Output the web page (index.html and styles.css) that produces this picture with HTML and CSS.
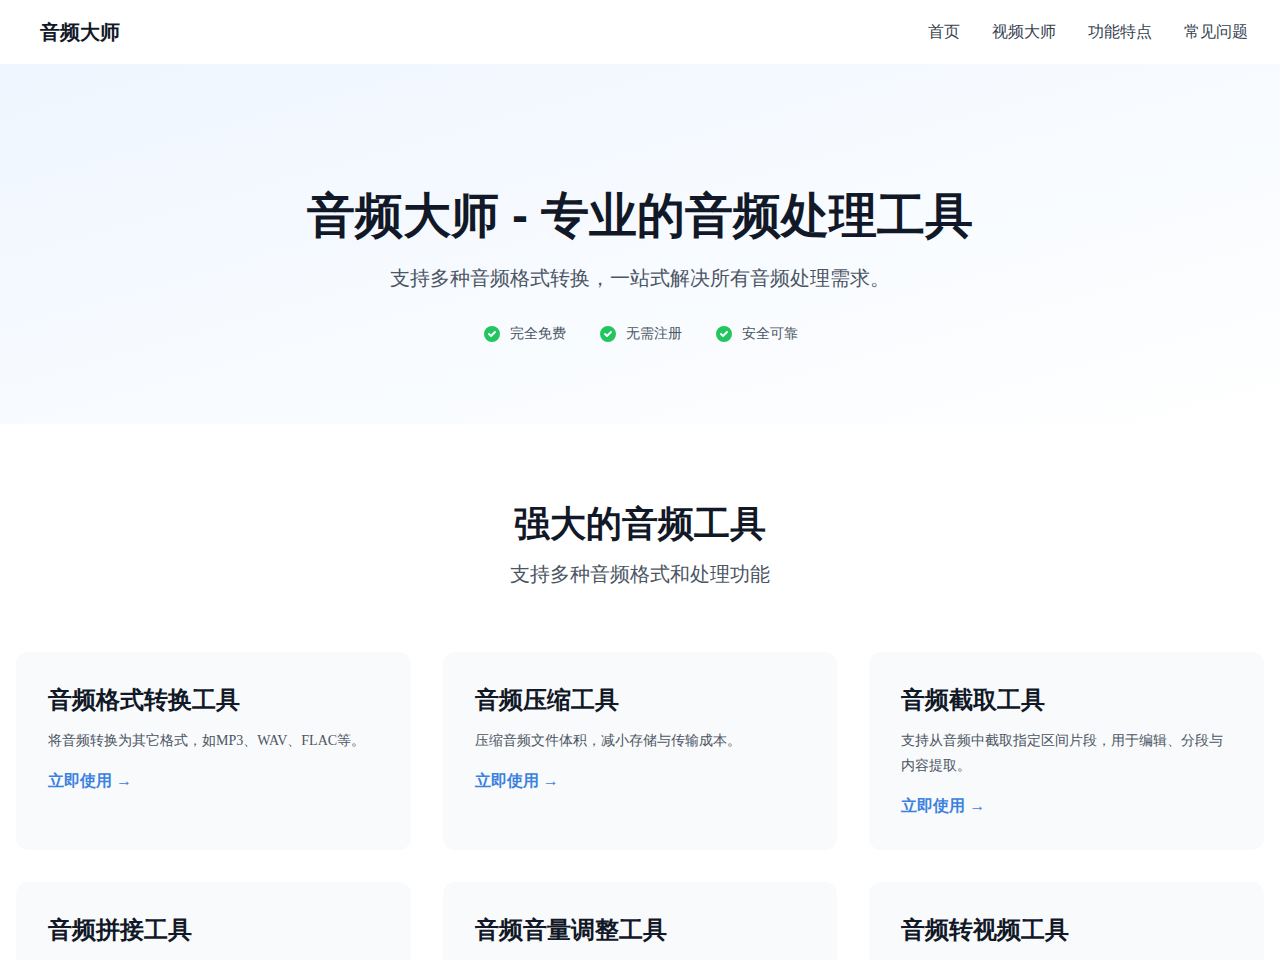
FILE: index.html
```html
<!DOCTYPE html>
<html lang="en">
<head>
  <meta charset="UTF-8" />
  <meta name="viewport" content="width=device-width, initial-scale=1.0"/>
  <title>音频大师 - 专业的音频处理工具</title>
  <link rel="stylesheet" href="styles.css">
</head>
<body>
  <header class="navbar">
    <a class="logo" href="#">音频大师</a>
    <nav class="nav-links">
      <a href="#">首页</a>
      <a href="#">视频大师</a>
      <a href="#tools">功能特点</a>
      <a href="#">常见问题</a>
    </nav>
  </header>

  <section class="hero">
    <h1>音频大师 - 专业的音频处理工具</h1>
    <p class="subtitle">支持多种音频格式转换，一站式解决所有音频处理需求。</p>
    <ul class="features">
      <li>
        <svg class="check" viewBox="0 0 20 20"><path fill-rule="evenodd" clip-rule="evenodd" d="M10 18a8 8 0 100-16 8 8 0 000 16zm3.707-9.293a1 1 0 00-1.414-1.414L9 10.586 7.707 9.293a1 1 0 00-1.414 1.414l2 2a1 1 0 001.414 0l4-4z"/></svg>
        完全免费
      </li>
      <li>
        <svg class="check" viewBox="0 0 20 20"><path fill-rule="evenodd" clip-rule="evenodd" d="M10 18a8 8 0 100-16 8 8 0 000 16zm3.707-9.293a1 1 0 00-1.414-1.414L9 10.586 7.707 9.293a1 1 0 00-1.414 1.414l2 2a1 1 0 001.414 0l4-4z"/></svg>
        无需注册
      </li>
      <li>
        <svg class="check" viewBox="0 0 20 20"><path fill-rule="evenodd" clip-rule="evenodd" d="M10 18a8 8 0 100-16 8 8 0 000 16zm3.707-9.293a1 1 0 00-1.414-1.414L9 10.586 7.707 9.293a1 1 0 00-1.414 1.414l2 2a1 1 0 001.414 0l4-4z"/></svg>
        安全可靠
      </li>
    </ul>
  </section>

  <section class="tools" id="tools">
    <div class="section-title">
      <h2>强大的音频工具</h2>
      <p class="subtitle">支持多种音频格式和处理功能</p>
    </div>
    <div class="tool-grid">
      <div class="tool-card">
        <h3>音频格式转换工具</h3>
        <p>将音频转换为其它格式，如MP3、WAV、FLAC等。</p>
        <a href="#">立即使用 →</a>
      </div>
      <div class="tool-card">
        <h3>音频压缩工具</h3>
        <p>压缩音频文件体积，减小存储与传输成本。</p>
        <a href="#">立即使用 →</a>
      </div>
      <div class="tool-card">
        <h3>音频截取工具</h3>
        <p>支持从音频中截取指定区间片段，用于编辑、分段与内容提取。</p>
        <a href="#">立即使用 →</a>
      </div>
      <div class="tool-card">
        <h3>音频拼接工具</h3>
      </div>
      <div class="tool-card">
        <h3>音频音量调整工具</h3>
      </div>
      <div class="tool-card">
        <h3>音频转视频工具</h3>
      </div>
    </div>
  </section>
</body>
</html>
```
FILE: styles.css
```css
* { box-sizing: border-box; margin: 0; padding: 0; }
body {
  font-family: "Liberation Serif", serif;
  font-size: 16px;
  line-height: 24px;
  color: #111827;
  background: #ffffff;
}
a { text-decoration: none; }

.navbar {
  display: flex;
  justify-content: space-between;
  align-items: center;
  height: 64px;
  padding: 0 32px;
  background: #ffffff;
}
.logo {
  padding: 0 8px;
  font-size: 20px;
  font-weight: 700;
  line-height: 28px;
  color: #111827;
}
.nav-links { display: flex; gap: 32px; }
.nav-links a { color: #374151; }

.hero {
  padding: 128px 16px 80px;
  text-align: center;
  background: linear-gradient(to bottom right, #eff6ff, #ffffff);
}
.hero h1 {
  font-family: "Liberation Sans", sans-serif;
  font-size: 48px;
  font-weight: 700;
  line-height: 48px;
  margin-bottom: 24px;
}
.subtitle {
  font-size: 20px;
  line-height: 28px;
  color: #4b5563;
}
.features {
  display: flex;
  justify-content: center;
  gap: 32px;
  margin-top: 32px;
  list-style: none;
  font-size: 14px;
  line-height: 20px;
  color: #4b5563;
}
.features li { display: flex; align-items: center; gap: 8px; }
.check { width: 20px; height: 20px; fill: #22c55e; }

.tools { padding: 80px 16px; }
.section-title { margin-bottom: 64px; text-align: center; }
.section-title h2 {
  font-size: 36px;
  font-weight: 700;
  line-height: 40px;
  margin-bottom: 16px;
}
.tool-grid {
  display: grid;
  grid-template-columns: repeat(3, 1fr);
  grid-auto-rows: 1fr;
  gap: 32px;
}
.tool-card {
  padding: 32px;
  border-radius: 12px;
  background: #f9fafb;
}
.tool-card h3 {
  font-size: 24px;
  font-weight: 700;
  line-height: 32px;
  margin-bottom: 12px;
}
.tool-card p {
  font-size: 14px;
  line-height: 25px;
  color: #4b5563;
  margin-bottom: 16px;
}
.tool-card a { font-weight: 600; color: #3b82e0; }

@media (max-width: 768px) {
  .nav-links { gap: 16px; }
  .tool-grid { grid-template-columns: 1fr; grid-auto-rows: auto; }
}
```
